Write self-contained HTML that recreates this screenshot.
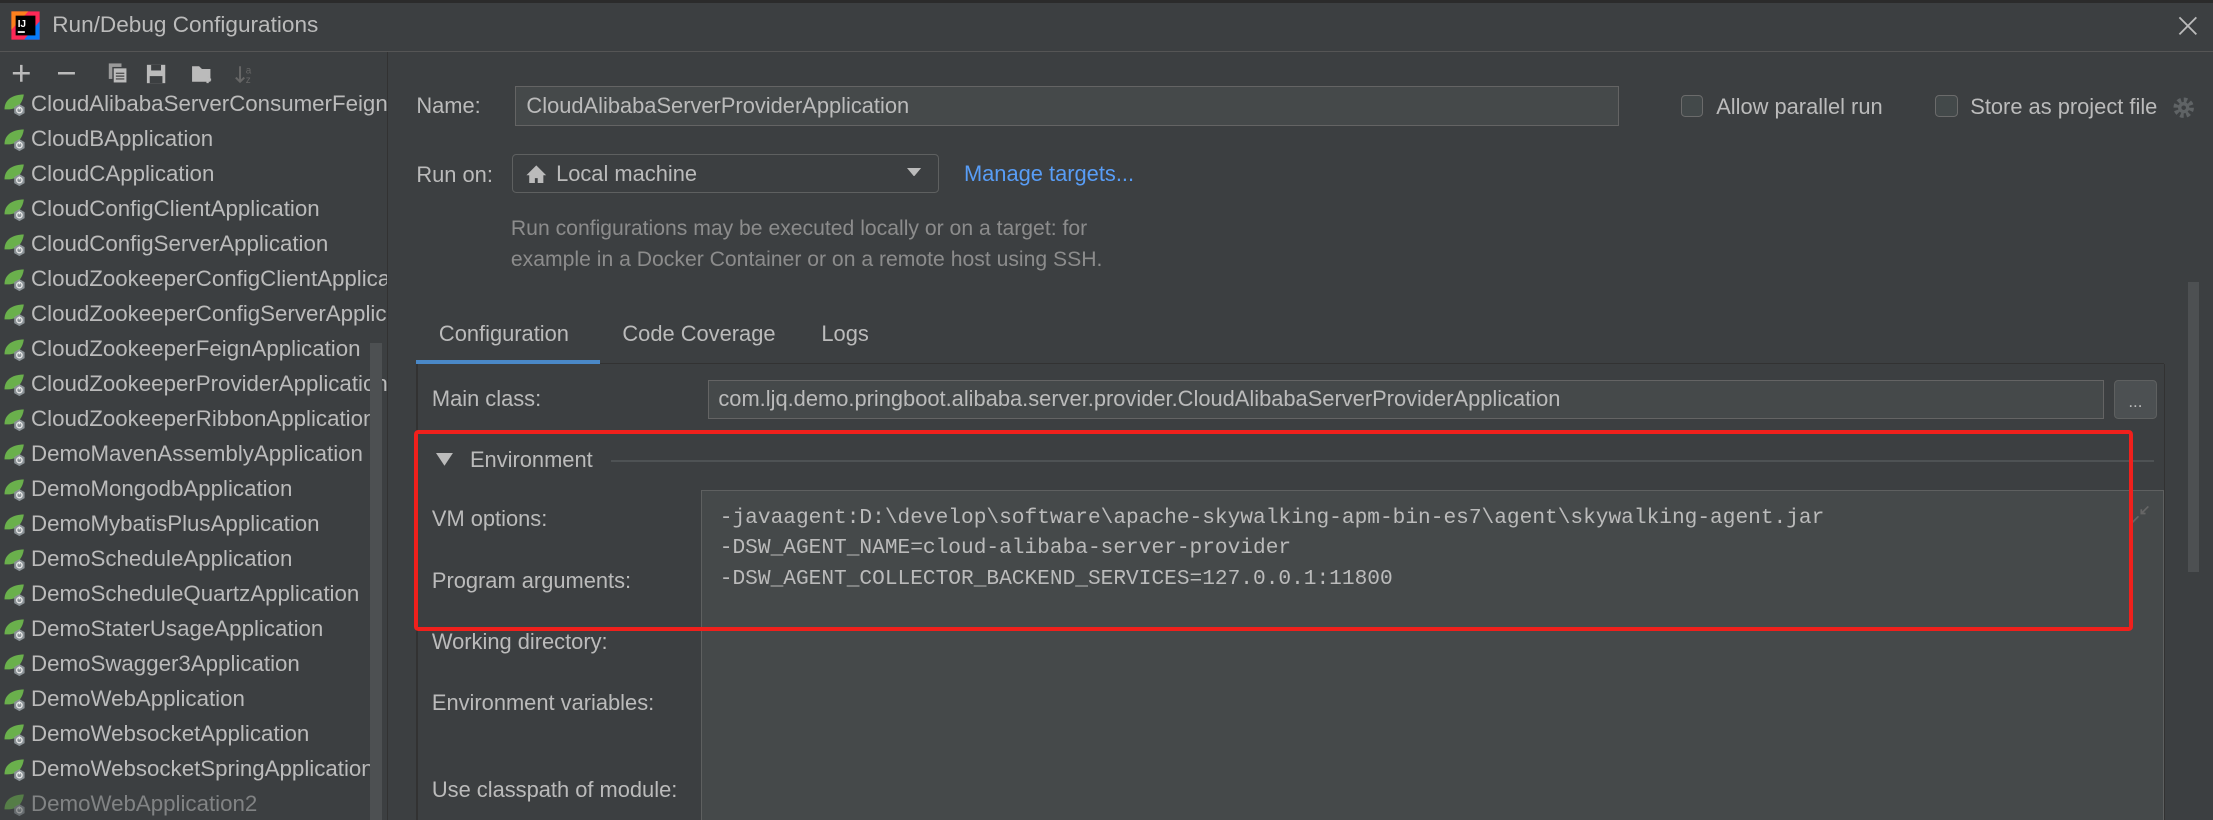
<!DOCTYPE html>
<html><head><meta charset="utf-8"><style>
html,body{margin:0;padding:0;background:#3c3f41;overflow:hidden;width:2213px;height:820px}
#w{zoom:1.41135;position:relative;width:1568px;height:581px;background:#3c3f41;font-family:"Liberation Sans",sans-serif;color:#bbbbbb;font-size:15.5px;overflow:hidden}
.a{position:absolute;white-space:nowrap}
.v{transform:translateY(-50%)}
.fld{position:absolute;background:#45494a;border:1px solid #646464;box-sizing:border-box}
.cb{position:absolute;width:16px;height:16px;border:1px solid #6b6b6b;border-radius:3px;background:#43494a;box-sizing:border-box}
.it{position:absolute;left:0;height:25px;display:flex;align-items:center;font-size:15.8px}
.it svg{margin:0 1px 0 2px;flex-shrink:0}
.mono{font-family:"Liberation Mono",monospace;font-size:15px;color:#bbbbbb}
</style></head><body><div id="w">
<div class="a" style="left:0;top:0;width:1568px;height:2px;background:#2b2b2b"></div>
<svg class="a" style="left:7px;top:7px" width="22" height="22" viewBox="0 0 22 22"><rect x="1" y="1" width="20" height="20" fill="#fe2857"/><path d="M1 1h12L1 14z" fill="#fc801d"/><path d="M21 8v13H10z" fill="#087cfa"/><rect x="4" y="4" width="14" height="14" fill="#000"/><text x="5.5" y="12" font-size="7" fill="#fff" font-family="Liberation Sans" font-weight="bold">IJ</text><rect x="5.5" y="15" width="5" height="1.2" fill="#fff"/></svg>
<div class="a v" style="left:37px;top:18px;font-size:16px;color:#bbbbbb">Run/Debug Configurations</div>
<svg class="a" style="left:1543px;top:11px" width="14" height="14"><path d="M1 1L13 13M13 1L1 13" stroke="#bbb" stroke-width="1.3"/></svg>
<div class="a" style="left:0;top:36px;width:1568px;height:1px;background:#555"></div>
<svg class="a" style="left:7px;top:44px" width="190" height="16">
<path d="M8 2v12M2 8h12" stroke="#bbb" stroke-width="1.8"/>
<path d="M34 8h12" stroke="#bbb" stroke-width="1.8"/>
<rect x="70" y="1" width="9" height="11" fill="#9a9a9a"/><rect x="73" y="4" width="10" height="11" fill="#bbb" stroke="#3c3f41"/><path d="M75 8h6M75 10h6M75 12h6" stroke="#555" stroke-width="1"/>
<rect x="97" y="2" width="13" height="13" fill="#bbb"/><rect x="100" y="2" width="7" height="4" fill="#3c3f41"/><rect x="99" y="10" width="9" height="5" fill="#3c3f41"/>
<path d="M129 3h5l2 2h6v9h-13z" fill="#bbb"/><path d="M140 10v5M137.5 12.5h5" stroke="#bbb" stroke-width="1.6"/>
<path d="M163 3v11M160 11l3 3 3-3" stroke="#666" stroke-width="1.4" fill="none"/><text x="167" y="8" font-size="7" fill="#666">a</text><text x="167" y="15" font-size="7" fill="#666">z</text>
</svg>
<div id="list"></div>
<div class="a" style="left:262px;top:243px;width:9px;height:338px;background:#4d5052"></div>
<div class="a" style="left:274px;top:37px;width:1px;height:544px;background:#323232"></div>
<div class="a v" style="left:295px;top:75px">Name:</div>
<div class="fld" style="left:365px;top:61px;width:782px;height:28px"></div>
<div class="a v" style="left:373px;top:75px">CloudAlibabaServerProviderApplication</div>
<div class="cb" style="left:1191px;top:67px"></div>
<div class="a v" style="left:1216px;top:76px">Allow parallel run</div>
<div class="cb" style="left:1371px;top:67px"></div>
<div class="a v" style="left:1396px;top:76px">Store as project file</div>
<svg class="a" style="left:1538px;top:67px" width="18" height="18" viewBox="0 0 18 18"><circle cx="9" cy="9" r="5.5" fill="none" stroke="#5f6365" stroke-width="3.5" stroke-dasharray="2.4 1.9"/><circle cx="9" cy="9" r="4" fill="#5f6365"/><circle cx="9" cy="9" r="1.6" fill="#3c3f41"/></svg>
<div class="a v" style="left:295px;top:124px">Run on:</div>
<div class="fld" style="left:363px;top:109px;width:302px;height:28px;border-radius:3px;border-color:#5e6060;background:#3c3f41"></div>
<svg class="a" style="left:372px;top:116px" width="16" height="14"><path d="M8 1L1 8h2v6h4v-4h2v4h4V8h2z" fill="#bbb"/></svg>
<div class="a v" style="left:394px;top:123px">Local machine</div>
<svg class="a" style="left:643px;top:119px" width="10" height="6"><path d="M0 0h10L5 6z" fill="#bbb"/></svg>
<div class="a v" style="left:683px;top:123px;color:#589df6">Manage targets...</div>
<div class="a v" style="left:362px;top:162px;color:#8c8c8c;font-size:15px">Run configurations may be executed locally or on a target: for</div>
<div class="a v" style="left:362px;top:184px;color:#8c8c8c;font-size:15px">example in a Docker Container or on a remote host using SSH.</div>
<div class="a v" style="left:311px;top:237px">Configuration</div>
<div class="a v" style="left:441px;top:237px">Code Coverage</div>
<div class="a v" style="left:582px;top:237px">Logs</div>
<div class="a" style="left:295px;top:257px;width:1238px;height:1px;background:#323232"></div>
<div class="a" style="left:295px;top:255px;width:130px;height:3px;background:#4a88c7"></div>
<div class="a" style="left:295px;top:258px;width:1px;height:323px;background:#323232"></div>
<div class="a" style="left:1533px;top:258px;width:1px;height:323px;background:#323232"></div>
<div class="a" style="left:1550px;top:200px;width:8px;height:205px;background:#4d5052"></div>
<div class="a v" style="left:306px;top:283px">Main class:</div>
<div class="fld" style="left:502px;top:269px;width:989px;height:28px"></div>
<div class="a v" style="left:509px;top:283px">com.ljq.demo.pringboot.alibaba.server.provider.CloudAlibabaServerProviderApplication</div>
<div class="fld" style="left:1498px;top:269px;width:30px;height:28px;border-radius:3px;border-color:#5e6060;background:#4c5052"></div>
<div class="a v" style="left:1508px;top:285px;font-size:12px">...</div>
<svg class="a" style="left:309px;top:321px" width="12" height="9"><path d="M0 0h12L6 9z" fill="#bbb"/></svg>
<div class="a v" style="left:333px;top:326px">Environment</div>
<div class="a" style="left:433px;top:326px;width:1093px;height:1px;background:#4e5254"></div>
<div class="fld" style="left:497px;top:347px;width:1036px;height:240px;border-color:#5e6060"></div>
<div class="a v mono" style="left:510px;top:367px">-javaagent:D:\develop\software\apache-skywalking-apm-bin-es7\agent\skywalking-agent.jar</div>
<div class="a v mono" style="left:510px;top:388px">-DSW_AGENT_NAME=cloud-alibaba-server-provider</div>
<div class="a v mono" style="left:510px;top:410px">-DSW_AGENT_COLLECTOR_BACKEND_SERVICES=127.0.0.1:11800</div>
<svg class="a" style="left:1509px;top:358px" width="14" height="14"><path d="M13 1L8 6M8 3v3h3M1 13l5-5" stroke="#666" stroke-width="1.2" fill="none"/></svg>
<div class="a v" style="left:306px;top:368px">VM options:</div>
<div class="a v" style="left:306px;top:412px">Program arguments:</div>
<div class="a v" style="left:306px;top:455px">Working directory:</div>
<div class="a v" style="left:306px;top:498px">Environment variables:</div>
<div class="a v" style="left:306px;top:560px">Use classpath of module:</div>
<div class="a" style="left:293px;top:305px;width:1218px;height:142px;border:3px solid #f0201c;border-radius:3px;box-sizing:border-box"></div>
</div>
<script>
var n=["CloudAlibabaServerConsumerFeignApplication","CloudBApplication","CloudCApplication","CloudConfigClientApplication","CloudConfigServerApplication","CloudZookeeperConfigClientApplication","CloudZookeeperConfigServerApplication","CloudZookeeperFeignApplication","CloudZookeeperProviderApplication","CloudZookeeperRibbonApplication","DemoMavenAssemblyApplication","DemoMongodbApplication","DemoMybatisPlusApplication","DemoScheduleApplication","DemoScheduleQuartzApplication","DemoStaterUsageApplication","DemoSwagger3Application","DemoWebApplication","DemoWebsocketApplication","DemoWebsocketSpringApplication","DemoWebApplication2"];
var ic='<svg width="19" height="19" viewBox="0 0 18 18"><path d="M1 13C1 6 7 3 14 3c-1 6-4 10-11 10z" fill="#6ab04c"/><path d="M11 9.5l3.5 2v4L11 17.5l-3.5-2v-4z" fill="#8a9296"/><circle cx="11" cy="13.5" r="1.8" fill="none" stroke="#e8e8e8" stroke-width=".9"/><path d="M11 11v2" stroke="#e8e8e8" stroke-width=".9"/></svg>';
var h='';for(var i=0;i<n.length;i++){var y=61+i*24.8;h+='<div class="it" style="top:'+y+'px;width:275px;overflow:hidden;'+(i==20?'opacity:.55':'')+'">'+ic+'<span style="white-space:nowrap">'+n[i]+'</span></div>';}
document.getElementById('list').innerHTML=h;
</script>
</body></html>
